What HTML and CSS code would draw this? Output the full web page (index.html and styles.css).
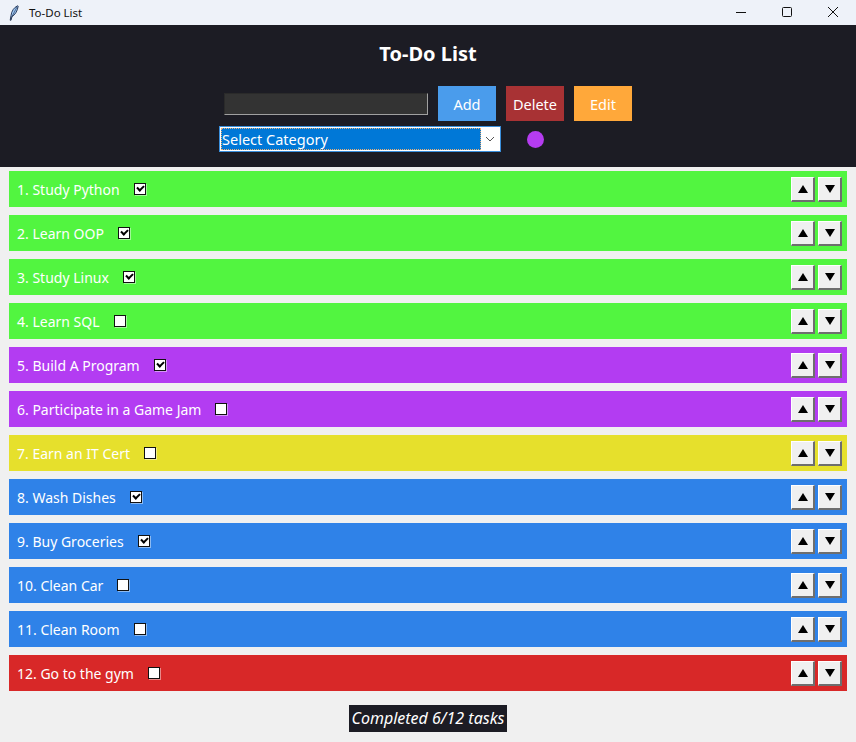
FILE: index.html
```html
<!DOCTYPE html>
<html>
<head>
<meta charset="utf-8">
<link rel="stylesheet" href="styles.css">
</head>
<body>
<div class="window">
  <div class="titlebar">
    <svg class="app-icon" width="10" height="16" viewBox="0 0 10 16">
      <path d="M8.5 0.8 C5 2.5 2.5 6 2 10.5 L1.2 15.2 L2 15.3 L3 11.5 C6 10 8.5 6 9.2 1.2 Z" fill="#9cc7f5" stroke="#1b2a4a" stroke-width="0.9"/>
      <path d="M8 2 L2.5 12.5" stroke="#1b2a4a" stroke-width="0.6"/>
    </svg>
    <span class="title-text">To-Do List</span>
    <div class="win-controls">
      <svg class="wc" width="46" height="25" viewBox="0 0 46 25"><path d="M18 12.5 H28" stroke="#111" stroke-width="1"/></svg>
      <svg class="wc" width="46" height="25" viewBox="0 0 46 25"><rect x="18.5" y="7.5" width="9" height="9" rx="1" fill="none" stroke="#111" stroke-width="1"/></svg>
      <svg class="wc" width="46" height="25" viewBox="0 0 46 25"><path d="M18 7 L28 17 M28 7 L18 17" stroke="#111" stroke-width="1"/></svg>
    </div>
  </div>

  <div class="header">
    <h1 class="app-title">To-Do List</h1>
    <div class="controls">
      <div class="entry"></div>
      <button class="btn btn-add">Add</button>
      <button class="btn btn-delete">Delete</button>
      <button class="btn btn-edit">Edit</button>
    </div>
    <div class="category-row">
      <div class="select">
        <span class="select-text">Select Category</span>
        <span class="select-arrow">
          <svg width="10" height="6" viewBox="0 0 10 6"><path d="M1 1 L5 5 L9 1" fill="none" stroke="#555" stroke-width="1"/></svg>
        </span>
      </div>
      <span class="color-dot"></span>
    </div>
  </div>

  <div class="list">
    <div class="task green"><span class="label">1. Study Python</span><span class="cb checked"></span><span class="arrows"><span class="arr up"></span><span class="arr down"></span></span></div>
    <div class="task green"><span class="label">2. Learn OOP</span><span class="cb checked"></span><span class="arrows"><span class="arr up"></span><span class="arr down"></span></span></div>
    <div class="task green"><span class="label">3. Study Linux</span><span class="cb checked"></span><span class="arrows"><span class="arr up"></span><span class="arr down"></span></span></div>
    <div class="task green"><span class="label">4. Learn SQL</span><span class="cb"></span><span class="arrows"><span class="arr up"></span><span class="arr down"></span></span></div>
    <div class="task purple"><span class="label">5. Build A Program</span><span class="cb checked"></span><span class="arrows"><span class="arr up"></span><span class="arr down"></span></span></div>
    <div class="task purple"><span class="label">6. Participate in a Game Jam</span><span class="cb"></span><span class="arrows"><span class="arr up"></span><span class="arr down"></span></span></div>
    <div class="task yellow"><span class="label">7. Earn an IT Cert</span><span class="cb"></span><span class="arrows"><span class="arr up"></span><span class="arr down"></span></span></div>
    <div class="task blue"><span class="label">8. Wash Dishes</span><span class="cb checked"></span><span class="arrows"><span class="arr up"></span><span class="arr down"></span></span></div>
    <div class="task blue"><span class="label">9. Buy Groceries</span><span class="cb checked"></span><span class="arrows"><span class="arr up"></span><span class="arr down"></span></span></div>
    <div class="task blue"><span class="label">10. Clean Car</span><span class="cb"></span><span class="arrows"><span class="arr up"></span><span class="arr down"></span></span></div>
    <div class="task blue"><span class="label">11. Clean Room</span><span class="cb"></span><span class="arrows"><span class="arr up"></span><span class="arr down"></span></span></div>
    <div class="task red"><span class="label">12. Go to the gym</span><span class="cb"></span><span class="arrows"><span class="arr up"></span><span class="arr down"></span></span></div>
  </div>

  <div class="footer">
    <span class="status">Completed 6/12 tasks</span>
  </div>
</div>
</body>
</html>
```

FILE: styles.css
```css
* { box-sizing: border-box; }
html, body {
  margin: 0;
  padding: 0;
  width: 856px;
  height: 742px;
  overflow: hidden;
  background: #f0f0f0;
  font-family: "Noto Sans", "Open Sans", sans-serif;
}
.window {
  width: 856px;
  height: 742px;
  display: flex;
  flex-direction: column;
}
.titlebar {
  height: 25px;
  background: #eef2f9;
  display: flex;
  align-items: center;
  padding-left: 9px;
}
.app-icon { margin-right: 10px; }
.title-text {
  font-size: 11.5px;
  color: #111;
}
.win-controls {
  margin-left: auto;
  display: flex;
  margin-right: 0;
}
.wc { display: block; }

.header {
  height: 142px;
  background: #1c1c24;
  display: flex;
  flex-direction: column;
  align-items: center;
}
.app-title {
  margin: 16px 0 0 0;
  height: 26px;
  font-size: 20px;
  line-height: 26px;
  font-weight: 700;
  color: #ffffff;
}
.controls {
  margin-top: 19px;
  display: flex;
  align-items: center;
  gap: 10px;
}
.entry {
  width: 204px;
  height: 22px;
  background: #333333;
  border-top: 1px solid #2a2a2a;
  border-left: 1px solid #2a2a2a;
  border-right: 1px solid #a0a0a0;
  border-bottom: 1px solid #a0a0a0;
}
.btn {
  width: 58px;
  height: 35px;
  border: none;
  padding: 0;
  font-family: inherit;
  font-size: 14.5px;
  color: #ffffff;
}
.btn-add { background: #4a9cec; }
.btn-delete { background: #a83234; }
.btn-edit { background: #ffa83a; }

.category-row {
  margin-top: 5px;
  align-self: flex-start;
  margin-left: 219px;
  display: flex;
  align-items: center;
}
.select {
  width: 282px;
  height: 26px;
  border: 1px solid #3a8fdc;
  background: #ffffff;
  display: flex;
  padding: 1px;
}
.select-text {
  flex: 1;
  background: #0078d7;
  color: #ffffff;
  font-size: 14.5px;
  line-height: 22px;
  padding-left: 1px;
  outline: 1px dotted #e8b07a;
  outline-offset: -1px;
  white-space: nowrap;
}
.select-arrow {
  width: 18px;
  display: flex;
  align-items: center;
  justify-content: center;
  background: #ffffff;
}
.color-dot {
  margin-left: 26px;
  width: 17px;
  height: 17px;
  border-radius: 50%;
  background: #b53cf0;
}

.list {
  padding: 4px 9px 0 9px;
  display: flex;
  flex-direction: column;
  gap: 8px;
}
.task {
  height: 36px;
  display: flex;
  align-items: center;
  padding-left: 8px;
  padding-right: 5px;
  color: #ffffff;
}
.label {
  font-size: 14px;
  white-space: nowrap;
}
.green { background: #52f540; }
.purple { background: #b33cf2; }
.yellow { background: #e6e02c; }
.blue { background: #2f82e8; }
.red { background: #d82828; }

.cb {
  margin-left: 14px;
  width: 12px;
  height: 12px;
  background: #ffffff;
  border: 1px solid #111;
  box-shadow: 1px 1px 0 rgba(255,255,255,0.45);
  position: relative;
}
.cb.checked::after {
  content: "";
  position: absolute;
  left: 2px;
  top: 1px;
  width: 5px;
  height: 3px;
  border-left: 2px solid #000;
  border-bottom: 2px solid #000;
  transform: translate(0px, 0px) rotate(-45deg);
  transform-origin: center;
}
.arrows {
  margin-left: auto;
  display: flex;
  gap: 3px;
}
.arr {
  width: 24px;
  height: 25px;
  background: #f0f0f0;
  border-top: 1px solid #ffffff;
  border-left: 1px solid #ffffff;
  border-right: 2px solid #6e6e6e;
  border-bottom: 2px solid #6e6e6e;
  display: flex;
  align-items: center;
  justify-content: center;
}
.arr::before {
  content: "";
  width: 0;
  height: 0;
  border-left: 5px solid transparent;
  border-right: 5px solid transparent;
}
.arr.up::before { border-bottom: 8px solid #000; }
.arr.down::before { border-top: 8px solid #000; }

.footer {
  display: flex;
  justify-content: center;
  margin-top: 14px;
}
.status {
  background: #1c1c24;
  color: #ffffff;
  font-style: italic;
  font-size: 16px;
  line-height: 27px;
  padding: 0 3px;
}
```
